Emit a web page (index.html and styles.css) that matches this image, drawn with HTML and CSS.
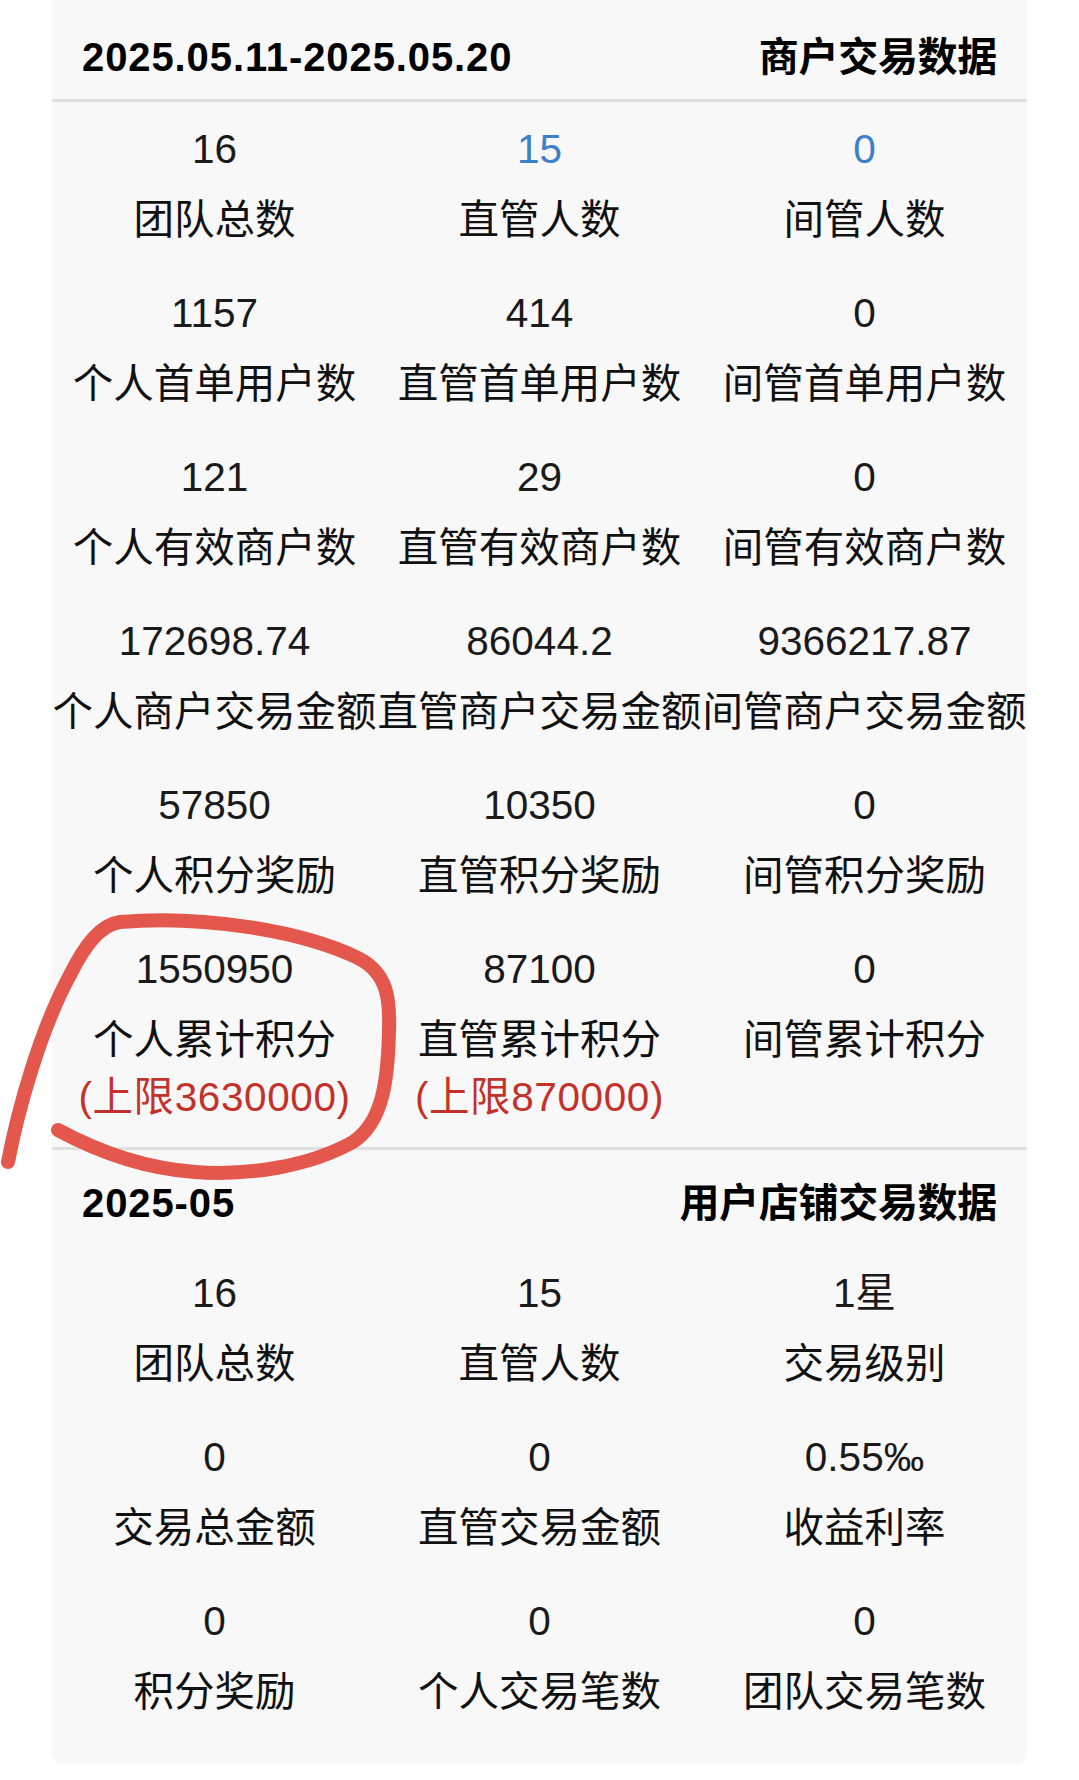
FILE: index.html
```html
<!DOCTYPE html>
<html lang="zh-CN">
<head>
<meta charset="utf-8">
<title>交易数据</title>
<link rel="stylesheet" href="styles.css">
</head>
<body>
<div class="card">
  <section class="sec sec-first">
    <div class="head head-first">
      <span class="date">2025.05.11-2025.05.20</span>
      <span class="title">商户交易数据</span>
    </div>
    <div class="grid grid-first">
      <div class="cell"><div class="num">16</div><div class="lbl">团队总数</div></div>
      <div class="cell"><div class="num blue">15</div><div class="lbl">直管人数</div></div>
      <div class="cell"><div class="num blue">0</div><div class="lbl">间管人数</div></div>

      <div class="cell"><div class="num">1157</div><div class="lbl">个人首单用户数</div></div>
      <div class="cell"><div class="num">414</div><div class="lbl">直管首单用户数</div></div>
      <div class="cell"><div class="num">0</div><div class="lbl">间管首单用户数</div></div>

      <div class="cell"><div class="num">121</div><div class="lbl">个人有效商户数</div></div>
      <div class="cell"><div class="num">29</div><div class="lbl">直管有效商户数</div></div>
      <div class="cell"><div class="num">0</div><div class="lbl">间管有效商户数</div></div>

      <div class="cell"><div class="num">172698.74</div><div class="lbl">个人商户交易金额</div></div>
      <div class="cell"><div class="num">86044.2</div><div class="lbl">直管商户交易金额</div></div>
      <div class="cell"><div class="num">9366217.87</div><div class="lbl">间管商户交易金额</div></div>

      <div class="cell"><div class="num">57850</div><div class="lbl">个人积分奖励</div></div>
      <div class="cell"><div class="num">10350</div><div class="lbl">直管积分奖励</div></div>
      <div class="cell"><div class="num">0</div><div class="lbl">间管积分奖励</div></div>

      <div class="cell"><div class="num">1550950</div><div class="lbl">个人累计积分</div><div class="limit">(上限3630000)</div></div>
      <div class="cell"><div class="num">87100</div><div class="lbl">直管累计积分</div><div class="limit">(上限870000)</div></div>
      <div class="cell"><div class="num">0</div><div class="lbl">间管累计积分</div></div>
    </div>
  </section>
  <section class="sec sec-second">
    <div class="head head-second">
      <span class="date">2025-05</span>
      <span class="title">用户店铺交易数据</span>
    </div>
    <div class="grid grid-second">
      <div class="cell"><div class="num">16</div><div class="lbl">团队总数</div></div>
      <div class="cell"><div class="num">15</div><div class="lbl">直管人数</div></div>
      <div class="cell"><div class="num">1星</div><div class="lbl">交易级别</div></div>

      <div class="cell"><div class="num">0</div><div class="lbl">交易总金额</div></div>
      <div class="cell"><div class="num">0</div><div class="lbl">直管交易金额</div></div>
      <div class="cell"><div class="num">0.55‰</div><div class="lbl">收益利率</div></div>

      <div class="cell"><div class="num">0</div><div class="lbl">积分奖励</div></div>
      <div class="cell"><div class="num">0</div><div class="lbl">个人交易笔数</div></div>
      <div class="cell"><div class="num">0</div><div class="lbl">团队交易笔数</div></div>
    </div>
  </section>
</div>
<svg class="mark" width="1079" height="1780" viewBox="0 0 1079 1780" xmlns="http://www.w3.org/2000/svg">
  <path d="M 8 1162 C 18 1110, 40 1030, 70 975 C 85 945, 100 925, 120 922 C 200 915, 300 930, 358 958 C 388 973, 390 1000, 389 1030 C 388 1080, 383 1122, 353 1142 C 310 1166, 250 1176, 195 1172 C 140 1168, 95 1150, 58 1130" fill="none" stroke="#e4574d" stroke-width="14" stroke-linecap="round" stroke-linejoin="round"/>
</svg>
</body>
</html>
```
FILE: styles.css
```css
html, body {
  margin: 0;
  padding: 0;
  background: #ffffff;
}
body {
  position: relative;
  width: 1079px;
  height: 1780px;
  overflow: hidden;
  font-family: "Liberation Sans", "Noto Sans CJK SC", sans-serif;
  color: #111111;
}
.card {
  margin-left: 52px;
  width: 975px;
  background: #f8f8f8;
  border-radius: 0 0 12px 12px;
  box-shadow: 0 1px 3px rgba(0, 0, 0, 0.03);
}
.head {
  display: flex;
  justify-content: space-between;
  align-items: center;
  padding: 0 30px;
  line-height: 71px;
  font-size: 40px;
  font-weight: bold;
  color: #000;
}
.head-first {
  padding-top: 22px;
  padding-bottom: 6px;
  border-bottom: 3px solid #e0e0e0;
}
.head-second {
  padding-top: 18.5px;
}
.date {
  letter-spacing: 0.9px;
}
.title {
  letter-spacing: -0.3px;
}
.grid {
  display: grid;
  grid-template-columns: repeat(3, 325px);
  row-gap: 22px;
  text-align: center;
}
.grid-first {
  padding-top: 11.5px;
  padding-bottom: 28px;
}
.sec-second {
  border-top: 3px solid #e0e0e0;
}
.grid-second {
  padding-top: 19px;
  padding-bottom: 35px;
}
.cell {
  display: flex;
  flex-direction: column;
  align-items: center;
}
.num {
  font-size: 40.5px;
  line-height: 71px;
  white-space: nowrap;
  color: #1a1a1a;
}
.lbl {
  font-size: 40.5px;
  line-height: 71px;
  white-space: nowrap;
}
.num.blue {
  color: #3d80c9;
}
.limit {
  font-size: 40.5px;
  line-height: 43px;
  color: #c4312b;
  white-space: nowrap;
  letter-spacing: 0.6px;
}
.mark {
  position: absolute;
  left: 0;
  top: 0;
  pointer-events: none;
}
```
